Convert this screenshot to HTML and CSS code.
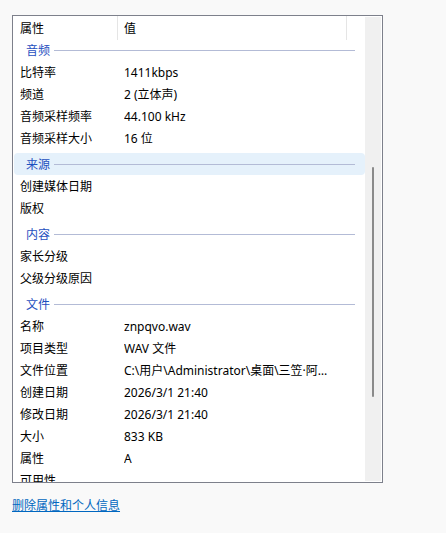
FILE: index.html
```html
<!DOCTYPE html>
<html lang="zh-CN">
<head>
<meta charset="utf-8">
<title>详细信息</title>
<link rel="stylesheet" href="styles.css">
</head>
<body>
<div class="panel">
  <div class="list">
    <div class="list-head">
      <div class="col-name">属性</div>
      <div class="col-value">值</div>
      <div class="col-rest"></div>
    </div>
    <div class="list-body">
      <div class="list-content">
        <div class="group"><div class="group-bar"><span>音频</span></div></div>
        <div class="row"><span class="name">比特率</span><span class="value">1411kbps</span></div>
        <div class="row"><span class="name">频道</span><span class="value">2 (立体声)</span></div>
        <div class="row"><span class="name">音频采样频率</span><span class="value">44.100 kHz</span></div>
        <div class="row"><span class="name">音频采样大小</span><span class="value">16 位</span></div>

        <div class="group hover"><div class="group-bar"><span>来源</span></div></div>
        <div class="row"><span class="name">创建媒体日期</span><span class="value"></span></div>
        <div class="row"><span class="name">版权</span><span class="value"></span></div>

        <div class="group"><div class="group-bar"><span>内容</span></div></div>
        <div class="row"><span class="name">家长分级</span><span class="value"></span></div>
        <div class="row"><span class="name">父级分级原因</span><span class="value"></span></div>

        <div class="group"><div class="group-bar"><span>文件</span></div></div>
        <div class="row"><span class="name">名称</span><span class="value">znpqvo.wav</span></div>
        <div class="row"><span class="name">项目类型</span><span class="value">WAV 文件</span></div>
        <div class="row"><span class="name">文件位置</span><span class="value">C:\用户\Administrator\桌面\三笠·阿克曼</span></div>
        <div class="row"><span class="name">创建日期</span><span class="value">2026/3/1 21:40</span></div>
        <div class="row"><span class="name">修改日期</span><span class="value">2026/3/1 21:40</span></div>
        <div class="row"><span class="name">大小</span><span class="value">833 KB</span></div>
        <div class="row"><span class="name">属性</span><span class="value">A</span></div>
        <div class="row"><span class="name">可用性</span><span class="value"></span></div>
      </div>
    </div>
  </div>
  <div class="scrollbar"><div class="thumb"></div></div>
</div>
<a class="link" href="#">删除属性和个人信息</a>
</body>
</html>
```

FILE: styles.css
```css
body {
  margin: 0;
  background: #f9f9f9;
  font-family: "Noto Sans", "Noto Sans CJK SC", sans-serif;
  font-size: 12px;
  color: #000;
}

/* property list frame */
.panel {
  margin: 15px 0 0 12px;
  width: 369px;
  height: 466px;
  border: 1px solid #7d808b;
  background: #fff;
  display: flex;
}

.list {
  width: 352px;
  display: flex;
  flex-direction: column;
}

/* column headers */
.list-head {
  flex: none;
  height: 24px;
  display: flex;
  line-height: 26px;
}

.col-name {
  width: 97px;
  padding-left: 7px;
  border-right: 1px solid #e5e5e5;
}

.col-value {
  width: 222px;
  padding-left: 6px;
  border-right: 1px solid #e5e5e5;
}

.col-rest {
  flex: 1;
}

/* scrolled body */
.list-body {
  flex: 1;
  overflow: hidden;
}

.list-content {
  margin-top: -5px;
}

.group {
  padding: 4px 0 0 1px;
}

.group-bar {
  height: 22px;
  display: flex;
  align-items: center;
  gap: 4px;
  padding: 0 10px 0 12px;
  border-radius: 4px;
  color: #1f50bf;
}

.group-bar span {
  line-height: 22px;
  padding-top: 2px;
}

.group-bar::after {
  content: "";
  flex: 1;
  height: 1px;
  background: #b3bbd6;
}

.group.hover .group-bar {
  background: #e5f1fb;
}

.row {
  height: 22px;
  line-height: 24px;
  display: flex;
  white-space: nowrap;
}

.name {
  flex: none;
  width: 104px;
  padding-left: 7px;
}

.value {
  width: 212px;
  overflow: hidden;
  text-overflow: ellipsis;
}

/* thin scrollbar */
.scrollbar {
  width: 16px;
  margin: 1px 1px 1px 0;
  background: #f0f0f0;
}

.thumb {
  margin: 150px 0 0 7px;
  width: 2px;
  height: 230px;
  border-radius: 1px;
  background: #8a8a8a;
}

.link {
  display: inline-block;
  margin: 15px 0 0 12px;
  line-height: 16px;
  color: #0067c0;
  text-decoration: underline;
}
```
